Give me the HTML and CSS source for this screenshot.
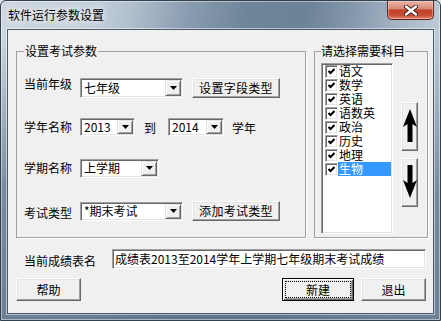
FILE: index.html
```html
<!DOCTYPE html>
<html lang="zh-CN">
<head>
<meta charset="utf-8">
<title>软件运行参数设置</title>
<link rel="stylesheet" href="styles.css">
</head>
<body>
<div class="window">
  <div class="titlebar">
    <span class="title">软件运行参数设置</span>
    <button class="close" aria-label="关闭">
      <svg width="14" height="11" viewBox="0 0 14 11">
        <path d="M2 1.5 L12 9.5 M12 1.5 L2 9.5" stroke="#3a1a16" stroke-width="4.2" stroke-linecap="round"/>
        <path d="M2 1.5 L12 9.5 M12 1.5 L2 9.5" stroke="#ffffff" stroke-width="2.4" stroke-linecap="round"/>
      </svg>
    </button>
  </div>
  <div class="client">
    <div class="groups">
      <fieldset class="group group-params">
        <legend>设置考试参数</legend>
        <div class="row">
          <span class="label label-top">当前年级</span>
          <div class="field combo w-grade"><span class="combo-value">七年级</span><span class="combo-btn"><svg width="7" height="4" viewBox="0 0 7 4"><polygon points="0,0 7,0 3.5,4" fill="#000"/></svg></span></div>
          <button class="btn btn-wide">设置字段类型</button>
        </div>
        <div class="row row-year">
          <span class="label">学年名称</span>
          <div class="field combo combo-short w-year"><span class="combo-value">2013</span><span class="combo-btn"><svg width="7" height="4" viewBox="0 0 7 4"><polygon points="0,0 7,0 3.5,4" fill="#000"/></svg></span></div>
          <span class="to">到</span>
          <div class="field combo combo-short w-year2"><span class="combo-value">2014</span><span class="combo-btn"><svg width="7" height="4" viewBox="0 0 7 4"><polygon points="0,0 7,0 3.5,4" fill="#000"/></svg></span></div>
          <span class="suffix">学年</span>
        </div>
        <div class="row row-term">
          <span class="label">学期名称</span>
          <div class="field combo combo-mid w-term"><span class="combo-value">上学期</span><span class="combo-btn"><svg width="7" height="4" viewBox="0 0 7 4"><polygon points="0,0 7,0 3.5,4" fill="#000"/></svg></span></div>
        </div>
        <div class="row row-type">
          <span class="label label-low">考试类型</span>
          <div class="field combo combo-mid w-grade"><span class="combo-value">*期末考试</span><span class="combo-btn"><svg width="7" height="4" viewBox="0 0 7 4"><polygon points="0,0 7,0 3.5,4" fill="#000"/></svg></span></div>
          <button class="btn btn-wide">添加考试类型</button>
        </div>
      </fieldset>
      <fieldset class="group group-subjects">
        <legend>请选择需要科目</legend>
        <div class="subject-body">
          <ul class="field checklist">
            <li class="item"><span class="check"><svg width="7" height="7" viewBox="0 0 7 7"><polyline points="0.5,3 2.5,5 6.5,1" fill="none" stroke="#000" stroke-width="2"/></svg></span><span class="item-text">语文</span></li>
            <li class="item"><span class="check"><svg width="7" height="7" viewBox="0 0 7 7"><polyline points="0.5,3 2.5,5 6.5,1" fill="none" stroke="#000" stroke-width="2"/></svg></span><span class="item-text">数学</span></li>
            <li class="item"><span class="check"><svg width="7" height="7" viewBox="0 0 7 7"><polyline points="0.5,3 2.5,5 6.5,1" fill="none" stroke="#000" stroke-width="2"/></svg></span><span class="item-text">英语</span></li>
            <li class="item"><span class="check"><svg width="7" height="7" viewBox="0 0 7 7"><polyline points="0.5,3 2.5,5 6.5,1" fill="none" stroke="#000" stroke-width="2"/></svg></span><span class="item-text">语数英</span></li>
            <li class="item"><span class="check"><svg width="7" height="7" viewBox="0 0 7 7"><polyline points="0.5,3 2.5,5 6.5,1" fill="none" stroke="#000" stroke-width="2"/></svg></span><span class="item-text">政治</span></li>
            <li class="item"><span class="check"><svg width="7" height="7" viewBox="0 0 7 7"><polyline points="0.5,3 2.5,5 6.5,1" fill="none" stroke="#000" stroke-width="2"/></svg></span><span class="item-text">历史</span></li>
            <li class="item"><span class="check"><svg width="7" height="7" viewBox="0 0 7 7"><polyline points="0.5,3 2.5,5 6.5,1" fill="none" stroke="#000" stroke-width="2"/></svg></span><span class="item-text">地理</span></li>
            <li class="item"><span class="check"><svg width="7" height="7" viewBox="0 0 7 7"><polyline points="0.5,3 2.5,5 6.5,1" fill="none" stroke="#000" stroke-width="2"/></svg></span><span class="item-text selected">生物</span></li>
          </ul>
          <div class="movers">
            <button class="btn mover" aria-label="上移">
              <svg width="14" height="33" viewBox="0 0 14 33"><polygon points="7,0 14,18 9.5,15 9.5,33 4.5,33 4.5,15 0,18" fill="#000"/></svg>
            </button>
            <button class="btn mover" aria-label="下移">
              <svg width="14" height="33" viewBox="0 0 14 33"><polygon points="7,33 14,15 9.5,18 9.5,0 4.5,0 4.5,18 0,15" fill="#000"/></svg>
            </button>
          </div>
        </div>
      </fieldset>
    </div>
    <div class="name-row">
      <span class="name-label">当前成绩表名</span>
      <div class="field textbox">成绩表2013至2014学年上学期七年级期末考试成绩</div>
    </div>
    <div class="actions">
      <button class="btn btn-help">帮助</button>
      <button class="btn btn-default btn-new">新建</button>
      <button class="btn btn-exit">退出</button>
    </div>
  </div>
</div>
</body>
</html>
```

FILE: styles.css
```css
html, body {
  margin: 0;
  padding: 0;
}

body {
  width: 441px;
  height: 321px;
  overflow: hidden;
  background: #dde4ea;
  font-family: "Liberation Sans Narrow", "Noto Sans CJK SC", "Noto Sans", sans-serif;
  font-size: 12px;
  color: #000;
}

.window {
  box-sizing: border-box;
  width: 441px;
  height: 321px;
  display: flex;
  flex-direction: column;
  border: 1px solid #33404d;
  border-radius: 6px 6px 0 0;
  background:
    linear-gradient(to bottom, rgba(92, 114, 137, 0) 0px, rgba(92, 114, 137, 0) 34px, rgba(92, 114, 137, 0.75) 190px, rgba(92, 114, 137, 0.85) 321px),
    linear-gradient(100deg, #cdd7e0 0%, #c4cfda 18%, #b3c1cf 26%, #8a9db0 38%, #6f8599 50%, #6c8297 62%, #8699ad 72%, #a9b8c8 82%, #c3cfda 92%, #cbd5df 100%);
  box-shadow: inset 0 0 0 1px rgba(255, 255, 255, 0.45);
}

.titlebar {
  flex: none;
  height: 28px;
  display: flex;
  align-items: flex-start;
}

.title {
  margin: 7px 0 0 7px;
  line-height: 14px;
  font-size: 12px;
  text-shadow: 0 0 6px rgba(255, 255, 255, 0.95), 0 0 10px rgba(255, 255, 255, 0.8);
}

.close {
  margin-left: auto;
  margin-right: 6px;
  width: 47px;
  height: 19px;
  padding: 0;
  border: 1px solid #5e2620;
  border-top: none;
  border-radius: 0 0 5px 5px;
  background: linear-gradient(to bottom, #e9b3a6 0%, #d98a77 42%, #c2412b 50%, #c84a33 78%, #e0856a 100%);
  box-shadow: inset 0 0 0 1px rgba(255, 220, 210, 0.45);
  display: flex;
  align-items: center;
  justify-content: center;
}

.client {
  flex: 1;
  margin: 0 6px 6px;
  border: 1px solid #4a5a6a;
  background: #f0f0f0;
  padding: 15px 5px 0 8px;
  display: flex;
  flex-direction: column;
  box-shadow: 0 0 0 1px rgba(255, 255, 255, 0.5);
}

.groups {
  display: flex;
  gap: 8px;
}

.group {
  box-sizing: border-box;
  height: 193px;
  margin: 0;
  min-width: 0;
  border: 1px solid #a0a0a0;
  box-shadow: 1px 1px 0 #fff;
}

.group legend {
  padding: 0 1px;
  line-height: 12px;
  font-size: 12px;
}

.group-params {
  width: 290px;
  padding: 21px 0 0 7px;
}

.group-subjects {
  flex: 1;
  padding: 6px 0 0 6px;
}

.group-subjects legend {
  padding: 0;
}

.row {
  display: flex;
  align-items: center;
  height: 20px;
}

.row-year { margin-top: 19px; }
.row-term { margin-top: 21px; }
.row-type { margin-top: 23px; }

.label {
  width: 48px;
  margin-right: 8px;
  line-height: 12px;
  white-space: nowrap;
}

.label-top { align-self: flex-start; }
.label-low { padding-top: 3px; }

/* sunken 3D field */
.field {
  box-sizing: border-box;
  border: 1px solid;
  border-color: #a0a0a0 #fff #fff #a0a0a0;
  box-shadow: inset 1px 1px 0 #696969, inset -1px -1px 0 #e3e3e3;
  background: #fff;
}

.combo {
  display: flex;
  height: 20px;
}

.combo-short { height: 18px; }
.combo-mid { height: 19px; }

.w-grade { width: 103px; }
.w-year { width: 55px; }
.w-year2 { width: 56px; }
.w-term { width: 79px; }

.combo-value {
  flex: 1;
  align-self: center;
  padding-left: 3px;
  line-height: 14px;
  white-space: nowrap;
}

.combo-btn {
  box-sizing: border-box;
  flex: none;
  width: 16px;
  margin: 1px;
  border: 1px solid;
  border-color: #e3e3e3 #696969 #696969 #e3e3e3;
  box-shadow: inset 1px 1px 0 #fff, inset -1px -1px 0 #a0a0a0;
  background: #f0f0f0;
  display: flex;
  align-items: center;
  justify-content: center;
}

.combo-btn svg { display: block; }

/* raised 3D button */
.btn {
  box-sizing: border-box;
  margin: 0;
  padding: 0;
  border: 1px solid;
  border-color: #fff #696969 #696969 #fff;
  box-shadow: inset -1px -1px 0 #a0a0a0, inset 1px 1px 0 #e3e3e3;
  background: #f0f0f0;
  font-family: inherit;
  font-size: 12px;
  line-height: 14px;
  color: #000;
  display: flex;
  align-items: center;
  justify-content: center;
}

.btn-wide {
  width: 88px;
  height: 20px;
  margin-left: 9px;
  letter-spacing: 0.3px;
}

.to {
  margin: 0 12px 0 9px;
}

.suffix {
  margin-left: 8px;
}

.subject-body {
  display: flex;
  gap: 8px;
}

.checklist {
  list-style: none;
  margin: 0;
  padding: 0 1px 0 2px;
  width: 72px;
  height: 171px;
}

.item {
  display: flex;
  align-items: center;
  height: 14px;
}

.check {
  box-sizing: border-box;
  flex: none;
  width: 13px;
  height: 13px;
  margin-left: 1px;
  border: 1px solid;
  border-color: #a0a0a0 #fff #fff #a0a0a0;
  box-shadow: inset 1px 1px 0 #696969, inset -1px -1px 0 #e3e3e3;
  background: #fff;
  display: flex;
  align-items: center;
  justify-content: center;
}

.check svg { display: block; }

.item-text {
  flex: 1;
  height: 14px;
  line-height: 14px;
  padding-left: 1px;
  white-space: nowrap;
}

.item-text.selected {
  background: #3399ff;
  color: #fff;
}

.movers {
  display: flex;
  flex-direction: column;
  gap: 7px;
  padding-top: 39px;
}

.mover {
  width: 17px;
  height: 49px;
}

.mover svg { display: block; margin-top: -3px; }

.name-row {
  display: flex;
  align-items: center;
  margin: 11px 2px 0 8px;
}

.name-label {
  width: 72px;
  margin-right: 16px;
  padding-top: 3px;
  line-height: 12px;
  white-space: nowrap;
}

.textbox {
  flex: 1;
  height: 20px;
  padding-left: 2px;
  line-height: 18px;
  white-space: nowrap;
}

.actions {
  display: flex;
  margin: 9px 2px 0 0;
}

.btn-help {
  width: 65px;
  height: 23px;
}

.btn-new {
  width: 72px;
  height: 23px;
  margin-left: auto;
  margin-right: 7px;
}

.btn-exit {
  width: 65px;
  height: 23px;
}

.btn-default {
  position: relative;
  border: 1px solid #000;
  box-shadow: inset 1px 1px 0 #fff, inset -1px -1px 0 #696969, inset 2px 2px 0 #e3e3e3, inset -2px -2px 0 #a0a0a0;
}

.btn-default::after {
  content: "";
  position: absolute;
  left: 2px;
  top: 2px;
  right: 2px;
  bottom: 2px;
  border: 1px dotted #000;
}
```
